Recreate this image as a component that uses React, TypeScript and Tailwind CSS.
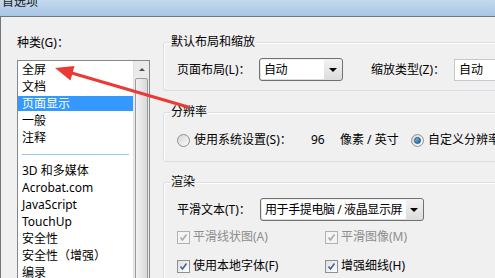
const font = { fontFamily: '"Noto Sans", "Noto Sans CJK SC", sans-serif' };

const categories = ['全屏', '文档', '页面显示', '一般', '注释'];
const moreCategories = ['3D 和多媒体', 'Acrobat.com', 'JavaScript', 'TouchUp', '安全性', '安全性（增强）', '编录'];

function Caret() {
  return <span className="block w-0 h-0 border-l-[4px] border-r-[4px] border-t-[4px] border-l-transparent border-r-transparent border-t-black" />;
}

function Dropdown({ value, width, whiteWidth }: { value: string; width: string; whiteWidth: string }) {
  return (
    <div className={`flex h-[23px] ${width} rounded-[3px] border border-[#707070] bg-gradient-to-b from-[#f2f2f2] to-[#dcdcdc] p-[1px]`}>
      <div className={`${whiteWidth} bg-white pl-[3px] flex items-center whitespace-nowrap overflow-hidden tracking-[-0.4px]`}>{value}</div>
      <div className="flex-1 flex items-center justify-center">
        <Caret />
      </div>
    </div>
  );
}

function Group({ title, className, children }: { title: string; className: string; children: React.ReactNode }) {
  return (
    <div className={`relative rounded-[3px] border border-[#d5dfe5] shadow-[inset_1px_1px_0_#ffffff] ${className}`}>
      <span className="absolute left-[6px] -top-[9px] bg-[#f0f0f0] px-[1px] leading-[16px]">{title}</span>
      {children}
    </div>
  );
}

function Radio({ checked }: { checked?: boolean }) {
  return (
    <span className="w-[13px] h-[13px] rounded-full border border-[#8e8f8f] bg-gradient-to-br from-[#d6d6d6] to-[#fbfbfb] flex items-center justify-center">
      {checked && <span className="w-[7px] h-[7px] rounded-full bg-gradient-to-br from-[#76c7f3] to-[#0a5fa8] border border-[#1c4f7a]" />}
    </span>
  );
}

function Check({ disabled }: { disabled?: boolean }) {
  return (
    <span
      className={`w-[13px] h-[13px] border flex items-center justify-center ${
        disabled ? 'border-[#b1b1b1] bg-[#f4f4f4]' : 'border-[#8e8f8f] bg-gradient-to-br from-[#dedede] to-white'
      }`}
    >
      <svg width="9" height="9" viewBox="0 0 9 9">
        <path d="M1.5 4.5 L3.5 7 L7.5 1.5" fill="none" stroke={disabled ? '#a8a8a8' : '#4a5f97'} strokeWidth="1.6" />
      </svg>
    </span>
  );
}

export default function App() {
  return (
    <div className="relative w-[495px] h-[278px] overflow-hidden bg-[#f0f0f0] text-[12px] text-black" style={font}>
      <div className="h-[16px] overflow-hidden bg-gradient-to-b from-[#c4d9ee] to-[#a7c5e4]">
        <span className="block -mt-[5px] pl-[2px] leading-[14px] text-[12px] text-[#1a1a1a]">首选项</span>
      </div>

      <div className="flex h-[262px] border-t border-l border-[#6f7780]">
        <div className="pl-[16px] w-[146px] shrink-0">
          <div className="mt-[18px] leading-[16px]">种类(G)：</div>
          <div className="mt-[9px] flex h-[300px] w-[133px] border border-[#828790] bg-white">
            <div className="flex-1">
              {categories.map((c, i) => (
                <div key={c} className="h-[17px] py-[1px]">
                  <div className={`h-[15px] pl-[4px] leading-[15px] ${i === 2 ? 'bg-[#3399ff] text-white' : ''}`}>{c}</div>
                </div>
              ))}
              <div className="h-[16px] flex items-center px-[4px]">
                <div className="h-px w-full bg-[#9cc6ee]" />
              </div>
              {moreCategories.map((c) => (
                <div key={c} className="h-[17px] pl-[4px] leading-[17px]">{c}</div>
              ))}
            </div>
            <div className="w-[16px] bg-[#eaeaea] border-l border-[#e3e3e3] flex flex-col">
              <div className="h-[17px] flex items-center justify-center">
                <span className="block w-0 h-0 border-l-[3px] border-r-[3px] border-b-[3px] border-l-transparent border-r-transparent border-b-[#4d4d4d]" />
              </div>
              <div className="mx-[1px] flex-1 rounded-[2px] border border-[#9a9a9a] bg-gradient-to-r from-[#f3f3f3] to-[#d8d8d8]" />
            </div>
          </div>
        </div>

        <div className="pl-[16px] flex-1">
          <Group title="默认布局和缩放" className="mt-[25px] h-[49px] w-[360px] pl-[13px] pt-[15px]">
            <div className="flex items-center">
              <span className="w-[82px]">页面布局(L)：</span>
              <Dropdown value="自动" width="w-[84px]" whiteWidth="w-[63px]" />
              <span className="ml-[28px] w-[83px]">缩放类型(Z)：</span>
              <div className="h-[22px] w-[60px] border border-[#c5c8cc] bg-white pl-[4px] leading-[20px]">自动</div>
            </div>
          </Group>

          <Group title="分辨率" className="mt-[21px] h-[50px] w-[360px] pl-[13px] pt-[19px]">
            <div className="flex items-center h-[16px]">
              <Radio />
              <span className="ml-[4px] w-[117px]">使用系统设置(S)：</span>
              <span className="w-[29px]">96</span>
              <span className="w-[71px]">像素 / 英寸</span>
              <Radio checked />
              <span className="ml-[4px] whitespace-nowrap">自定义分辨率(</span>
            </div>
          </Group>

          <Group title="渲染" className="mt-[20px] h-[140px] w-[360px] pl-[13px] pt-[15px]">
            <div className="flex items-center">
              <span className="w-[83px]">平滑文本(T)：</span>
              <Dropdown value="用于手提电脑 / 液晶显示屏" width="w-[164px]" whiteWidth="w-[144px]" />
            </div>
            <div className="mt-[8px] flex items-center h-[16px] text-[#8d8d8d]">
              <Check disabled />
              <span className="ml-[3px] w-[132px]">平滑线状图(A)</span>
              <Check disabled />
              <span className="ml-[3px]">平滑图像(M)</span>
            </div>
            <div className="mt-[13px] flex items-center h-[16px]">
              <Check />
              <span className="ml-[3px] w-[132px]">使用本地字体(F)</span>
              <Check />
              <span className="ml-[3px]">增强细线(H)</span>
            </div>
          </Group>
        </div>
      </div>

      <svg className="absolute left-0 top-0 pointer-events-none" width="495" height="278">
        <line x1="70" y1="72.5" x2="188" y2="107" stroke="#ea3a35" strokeWidth="3" strokeLinecap="round" />
        <polygon points="55,68 74.5,66 70.5,80.5" fill="#ea3a35" />
      </svg>
    </div>
  );
}
